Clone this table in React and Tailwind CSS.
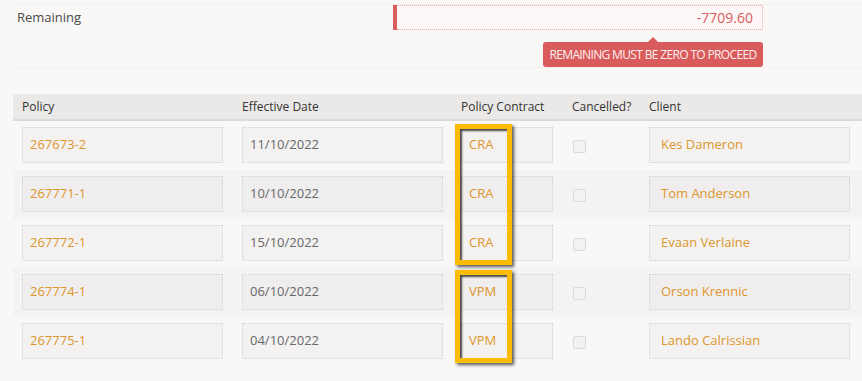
import React from "react";

const policies = [
  { id: "267673-2", date: "11/10/2022", contract: "CRA", client: "Kes Dameron" },
  { id: "267771-1", date: "10/10/2022", contract: "CRA", client: "Tom Anderson" },
  { id: "267772-1", date: "15/10/2022", contract: "CRA", client: "Evaan Verlaine" },
  { id: "267774-1", date: "06/10/2022", contract: "VPM", client: "Orson Krennic" },
  { id: "267775-1", date: "04/10/2022", contract: "VPM", client: "Lando Calrissian" },
];

const cols = "grid grid-cols-[220px_219px_111px_77px_1fr]";

const Field = ({ children, alt, tone = "text-[#dd962c]", className = "px-[7px]" }) => (
  <div
    className={`h-[36px] flex items-center border border-dotted border-[#d3d1cf] ${
      alt ? "bg-[#efeded]" : "bg-[#f3f2f1]"
    } ${tone} ${className}`}
  >
    {children}
  </div>
);

const Highlight = ({ top, height }) => (
  <div
    className="absolute left-[442px] w-[57px] border-[5px] border-[#fbbb06] shadow-[2px_2px_3px_rgba(0,0,0,0.65),inset_2px_2px_2px_rgba(0,0,0,0.7)] pointer-events-none"
    style={{ top, height }}
  />
);

const App = () => {
  return (
    <div className="w-[862px] h-[381px] bg-[#f9f8f7] pl-[13px] pt-[4px] font-['Open_Sans',sans-serif] text-[13px] overflow-hidden">
      {/* remaining balance */}
      <div className="h-[64px] border-t border-b border-[#f1efed] flex">
        <div className="w-[380px] pl-[4px] pt-[3px] text-[#4a4a4a]">Remaining</div>
        <div className="w-[370px] flex flex-col items-end">
          <div className="w-full h-[26px] flex">
            <div className="w-[4px] bg-[#dc5f5f]" />
            <div className="flex-1 flex items-center justify-end pr-[9px] bg-[#fdf8f7] border border-l-0 border-dotted border-[#e9a9a9] text-[14px] text-[#d95c5c]">
              -7709.60
            </div>
          </div>
          <div className="relative mt-[12px] h-[26px] w-[220px] rounded-[3px] bg-[#d95b5b] text-[#fdf0f0] text-[12px] tracking-[-0.65px] whitespace-nowrap flex items-center justify-center">
            <span className="absolute -top-[5px] left-[105px] w-0 h-0 border-l-[5px] border-r-[5px] border-b-[5px] border-l-transparent border-r-transparent border-b-[#d95b5b]" />
            REMAINING MUST BE ZERO TO PROCEED
          </div>
        </div>
      </div>

      {/* policies table */}
      <div className="relative mt-[26px]">
        <div className={`${cols} h-[27px] items-center bg-[#ebe9e7] border-b-2 border-[#dcdad8] text-[12px] text-[#333]`}>
          <div className="pl-[9px]">Policy</div>
          <div className="pl-[9px]">Effective Date</div>
          <div className="pl-[9px]">Policy Contract</div>
          <div className="pl-[9px]">Cancelled?</div>
          <div className="pl-[9px]">Client</div>
        </div>

        {policies.map((p, i) => {
          const alt = i % 2 === 1;
          return (
            <div
              key={p.id}
              className={`${cols} h-[49px] pt-[6px] ${alt ? "bg-[#f4f2f2]" : ""}`}
            >
              <div className="pl-[9px] pr-[10px]">
                <Field alt={alt}>{p.id}</Field>
              </div>
              <div className="pl-[9px] pr-[9px]">
                <Field alt={alt} tone="text-[#686868]">{p.date}</Field>
              </div>
              <div className="pl-[9px] pr-[10px]">
                <Field alt={alt}>{p.contract}</Field>
              </div>
              <div className="pl-[10px] pt-[13px]">
                <div className="w-[13px] h-[13px] rounded-[2px] border border-[#dcdbda] bg-[#f3f2f1]" />
              </div>
              <div className="pl-[9px] pr-[12px]">
                <Field alt={alt} className="px-[11px]">{p.client}</Field>
              </div>
            </div>
          );
        })}

        <Highlight top={30} height={141} />
        <Highlight top={176} height={93} />
      </div>
    </div>
  );
};

export default App;
